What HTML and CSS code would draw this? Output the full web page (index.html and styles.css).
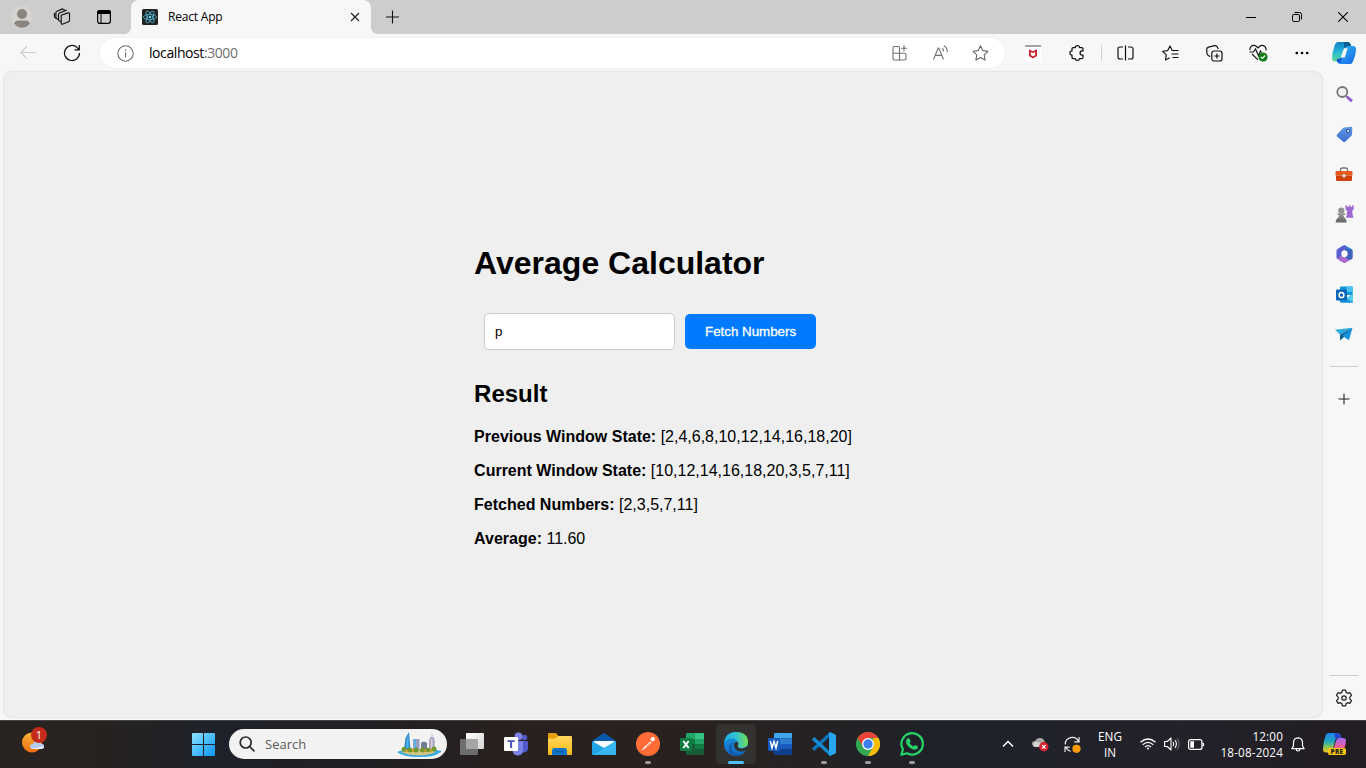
FILE: index.html
```html
<!DOCTYPE html>
<html lang="en">
<head>
<meta charset="utf-8">
<title>React App</title>
<link rel="stylesheet" href="styles.css">
</head>
<body>
<svg class="defs" width="0" height="0" aria-hidden="true">
  <defs>
    <linearGradient id="gWin" gradientUnits="userSpaceOnUse" x1="0" y1="0" x2="23" y2="23"><stop offset="0" stop-color="#8be4ff"/><stop offset="1" stop-color="#0a94f8"/></linearGradient>
    <linearGradient id="gCopA" x1="0" y1="0" x2="0" y2="1"><stop offset="0" stop-color="#0f7fc5"/><stop offset=".5" stop-color="#26b6d8"/><stop offset="1" stop-color="#5bdc95"/></linearGradient>
    <linearGradient id="gCopB" x1="0" y1="0" x2="1" y2="1"><stop offset="0" stop-color="#35c5f4"/><stop offset="1" stop-color="#1560e8"/></linearGradient>
    <linearGradient id="gPreA" x1="0" y1="0" x2="0" y2="1"><stop offset="0" stop-color="#2083ee"/><stop offset=".45" stop-color="#21a6b8"/><stop offset=".75" stop-color="#9bc94a"/><stop offset="1" stop-color="#f4c224"/></linearGradient>
    <linearGradient id="gPreB" x1="0" y1="0" x2="0" y2="1"><stop offset="0" stop-color="#a76af0"/><stop offset=".6" stop-color="#ec5f9b"/><stop offset="1" stop-color="#f68a50"/></linearGradient>
    <linearGradient id="gEdge" x1="0" y1="0" x2="1" y2="0"><stop offset="0" stop-color="#1ca8e2"/><stop offset=".5" stop-color="#35c1d4"/><stop offset="1" stop-color="#6de04f"/></linearGradient>
    <linearGradient id="gEdgeB" x1="0" y1="0" x2="0" y2="1"><stop offset="0" stop-color="#1b9de2"/><stop offset="1" stop-color="#1168c4"/></linearGradient>
    <linearGradient id="gSun" x1="0" y1="0" x2="0" y2="1"><stop offset="0" stop-color="#f9b233"/><stop offset="1" stop-color="#ee6e14"/></linearGradient>
    <linearGradient id="gTag" x1="0" y1="0" x2="0" y2="1"><stop offset="0" stop-color="#5f97e6"/><stop offset="1" stop-color="#3f6fd0"/></linearGradient>
    <linearGradient id="gGrey" x1="0" y1="0" x2="0" y2="1"><stop offset="0" stop-color="#9a9a9a"/><stop offset="1" stop-color="#626262"/></linearGradient>
    <linearGradient id="gTv" x1="0" y1="0" x2="1" y2="1"><stop offset="0" stop-color="#ffffff"/><stop offset="1" stop-color="#d4d4d4"/></linearGradient>
    <linearGradient id="gFold" x1="0" y1="0" x2="0" y2="1"><stop offset="0" stop-color="#ffd75e"/><stop offset="1" stop-color="#f7b917"/></linearGradient>
  </defs>
</svg>

<div class="browser">
  <header class="tabstrip">
    <span class="cell avatar"><svg width="22" height="24" viewBox="0 0 22 24"><ellipse cx="11" cy="12" rx="10.6" ry="11.3" fill="#d6d3d0"/><circle cx="11" cy="9" r="5" fill="#8b8580"/><path d="M3.200 18.500q1-3 4-3h7.600q3 0 4 3-3 4.200-7.800 4.300-4.800-.1-7.800-4.300z" fill="#8b8580"/></svg></span>
    <span class="cell spaces"><svg width="18" height="18" viewBox="0 0 18 18" fill="none" stroke="#111" stroke-width="1.15" stroke-linejoin="round"><path d="M8.200 7.200l6.800-2.300q1.500-.4 1.500 1v6.400q0 1-1 1.400l-5.600 2.300q-1.700.6-1.700-1z"/><path d="M8 13.800l-1.600-.8q-.9-.5-.9-1.500V6.400q0-1 1-1.400l7-2.900"/><path d="M5.300 11.500l-1.500-.8q-.9-.5-.9-1.500V4.700q0-1 1-1.400L9.500.9l2.200 1"/><path d="M3 10.200q-1.600-.4-1.600-2.200V5"/></svg></span>
    <span class="cell tabact"><svg width="16" height="16" viewBox="0 0 16 16"><rect x="1.600" y="1.600" width="12.800" height="12.800" rx="2.300" fill="none" stroke="#000" stroke-width="1.200"/><path d="M1 5V3.500Q1 1 3.500 1h9Q15 1 15 3.500V5z"/><path d="M5 5v9.500" stroke="#000" stroke-width="1"/></svg></span>
    <div class="tab">
      <svg width="16" height="16" viewBox="0 0 16 16"><rect width="16" height="16" rx="1.500" fill="#222"/><g fill="none" stroke="#4fb8d3" stroke-width=".8"><ellipse cx="8" cy="8" rx="6.600" ry="2.600"/><ellipse cx="8" cy="8" rx="6.600" ry="2.600" transform="rotate(60 8 8)"/><ellipse cx="8" cy="8" rx="6.600" ry="2.600" transform="rotate(120 8 8)"/></g><circle cx="8" cy="8" r="1.300" fill="#61dafb"/></svg>
      <span class="tab-title">React App</span>
      <svg class="tab-x" width="10" height="10" viewBox="0 0 10 10"><path d="M1 1l8 8M9 1l-8 8" stroke="#222" stroke-width="1.200"/></svg>
    </div>
    <span class="cell newtab"><svg width="14" height="14" viewBox="0 0 14 14"><path d="M7.500 .5v13M1 7h13" stroke="#111" stroke-width="1.100"/></svg></span>
    <div class="wincontrols">
      <span class="cell"><svg width="10" height="10" viewBox="0 0 10 10"><path d="M0 5.500h10" stroke="#000"/></svg></span>
      <span class="cell"><svg width="10" height="10" viewBox="0 0 10 10" fill="none" stroke="#000"><rect x=".5" y="2.500" width="7" height="7" rx="1.300"/><path d="M2.500.5H7.500Q9.500.5 9.500 2.500v5"/></svg></span>
      <span class="cell"><svg width="10" height="10" viewBox="0 0 10 10"><path d="M0 0l10 10M10 0L0 10" stroke="#000" stroke-width="1.100"/></svg></span>
    </div>
  </header>

  <div class="toolbar">
    <span class="cell nav back"><svg width="16" height="14" viewBox="0 0 16 14" fill="none" stroke="#cbcbcb" stroke-width="1.100"><path d="M16 6.500H.8M7 .3L.8 6.500 7 12.700"/></svg></span>
    <span class="cell nav"><svg width="18" height="18" viewBox="0 0 18 18" fill="none" stroke="#111" stroke-width="1.250"><path d="M16.500 9A7.500 7.500 0 1 1 14.200 3.600L16 5.500"/><path d="M16.300 1v4.800h-4.800"/></svg></span>
    <div class="address">
      <svg class="info" width="17" height="17" viewBox="0 0 17 17" fill="none" stroke="#6c6c6c" stroke-width="1.100"><circle cx="8.500" cy="8.500" r="7.700"/><path d="M8.500 7.200v5M8.500 4.500v1.400"/></svg>
      <span class="url">localhost<span class="port">:3000</span></span>
      <span class="cell aicon"><svg width="16" height="16" viewBox="0 0 16 16" fill="none" stroke="#717171" stroke-width="1.100"><path d="M7.500 15V2.500Q7.500 1.500 6.500 1.500H2.500Q1 1.500 1 3v10.500Q1 15 2.500 15H12.500Q14 15 14 13.500V9.500Q14 8.200 12.700 8.200H1"/><path d="M12 .2v6M9 3.200h6"/></svg></span>
      <span class="cell aicon"><svg width="17" height="16" viewBox="0 0 17 16" fill="none" stroke="#717171" stroke-width="1.100"><path d="M1.500 14.500L6.200 3h.6l4.700 11.500M3.200 10.400h6.600M9.900 3q1.900 1.100 1.700 3.500M11.800.8q3.700 2 3.500 6.400"/></svg></span>
      <span class="cell aicon"><svg width="17" height="16" viewBox="0 0 17 16" fill="none" stroke="#666" stroke-width="1.100" stroke-linejoin="round"><path d="M8.500.8l2.300 4.800 5.200.7-3.800 3.600.9 5.200-4.600-2.500L3.900 15.100l.9-5.200L1 6.300l5.200-.7z"/></svg></span>
    </div>
    <span class="cell tool mcafee"><svg width="16" height="16" viewBox="0 0 16 16"><path fill="#fff" d="M0 2h16v14H0z"/><path fill="#a3a3a3" d="M0 0h16v2H0z"/><path d="M4 4.300l4 1.900 4-1.900v6.600l-4 2.600-4-2.600z" fill="#c8202f"/><path d="M5.800 6.900L8 8l2.200-1.100v3.200L8 11.400l-2.200-1.300z" fill="#fff"/></svg></span>
    <span class="cell tool"><svg width="16" height="16" viewBox="0 0 16 16" fill="none" stroke="#111" stroke-width="1.250" stroke-linejoin="round"><path d="M4.200 2.600h2.100a2.100 1.900 0 0 1 4.200 0h2.300q1.200 0 1.200 1.200v2.100h-.8a2.100 2.100 0 0 0 0 4.300h.8v2.100q0 1.200-1.200 1.200h-2.300a2.100 1.900 0 0 1-4.200 0H4.200Q3 13.500 3 12.300v-2.200a2.100 2.100 0 0 1 0-4.200V3.800Q3 2.600 4.200 2.600z"/></svg></span>
    <span class="bar"></span>
    <span class="cell tool split"><svg width="17" height="16" viewBox="0 0 17 16" fill="none" stroke="#111" stroke-width="1.200"><path d="M8.500.5v15M6 2H3Q1 2 1 4v8q0 2 2 2h3M11 2h3q2 0 2 2v8q0 2-2 2h-3"/></svg></span>
    <span class="cell tool"><svg width="17" height="16" viewBox="0 0 17 16" fill="none" stroke="#111" stroke-width="1.150" stroke-linejoin="round"><path d="M10.200 5.500L8 .9 5.700 5.600l-5 .7 3.600 3.600-.8 5L7.700 12.700M10.200 5.500l1.500.2M10.500 5.500h6M9.500 9h7M10.500 12.500h6"/></svg></span>
    <span class="cell tool"><svg width="17" height="17" viewBox="0 0 17 17" fill="none" stroke="#111" stroke-width="1.200"><rect x="5.800" y="6" width="10.200" height="10" rx="2.200"/><path d="M10.900 8.400v5.200M8.300 11h5.200M4.200 11.500L2.600 10.700Q1 9.500.9 8.200L.7 4.700Q.6 2.700 2.500 2.100L8.500.7q1.800-.2 2.600 1.100l1.300 2.200"/></svg></span>
    <span class="cell tool"><svg width="19" height="18" viewBox="0 0 19 18" fill="none" stroke="#111" stroke-width="1.150"><path d="M1 6.200Q.5 3.900 2.200 2.300 4.500.6 7 2l2 1.900L11 2q2.500-1.400 4.600.3Q17.500 4 17 6.300M.5 8h4l2-3 3 6.500L11.500 7l1 1.500M3 10l6 5.800"/><circle cx="14" cy="13" r="4.600" fill="#137b16" stroke="none"/><path d="M11.800 13l1.600 1.500 2.800-3" stroke="#fff"/></svg></span>
    <span class="cell tool"><svg width="14" height="4" viewBox="0 0 14 4"><circle cx="1.800" cy="2" r="1.350"/><circle cx="7" cy="2" r="1.350"/><circle cx="12.200" cy="2" r="1.350"/></svg></span>
    <span class="cell cop"><svg width="24" height="22" viewBox="0 0 24 22"><path d="M6 0h9.500q2.500 0 3.200 2.500L19.600 6H15q-2 0-2.700 2.200L9.600 17q-.8 2.500-3.400 2.500H3Q0 19.500 0 16.500 0 10 3 2.500 4 0 6 0z" fill="url(#gCopA)"/><path d="M12 0h3.500q2.500 0 3.200 2.500L19.600 6H15q-2 0-2.700 2.200z" fill="#0b5e91"/><path d="M18 22H8.500Q6 22 5.300 19.500L4.600 17H6q3 0 4-3l2.600-7.500Q13.500 4 16.500 4H21q3 0 3 3 0 6.200-3 12.500Q20 22 18 22z" fill="url(#gCopB)"/><path d="M5.300 19.500L4.600 17H6q3 0 4-3l-1 5q-1 2.500-3 2z" fill="#1b50d8"/><path d="M12 6.300h3.600l-2.800 9.200H8.700z" fill="#f7f7f7"/></svg></span>
  </div>

  <div class="body">
    <main class="page">
      <div class="app">
        <h1>Average Calculator</h1>
        <div><input class="field" type="text" value="p"><button class="fetch">Fetch Numbers</button></div>
        <h2>Result</h2>
        <p><strong>Previous Window State:</strong> [2,4,6,8,10,12,14,16,18,20]</p>
        <p><strong>Current Window State:</strong> [10,12,14,16,18,20,3,5,7,11]</p>
        <p><strong>Fetched Numbers:</strong> [2,3,5,7,11]</p>
        <p><strong>Average:</strong> 11.60</p>
      </div>
    </main>
    <aside class="sidebar">
      <span class="side"><svg width="17" height="17" viewBox="0 0 17 17" fill="none"><circle cx="6.300" cy="6" r="5" stroke="#777" stroke-width="1.800" fill="#f0f0f0"/><path d="M10 9.700l1.700 1.700" stroke="#777" stroke-width="1.600"/><path d="M11.800 11.500l3.200 2.900" stroke="#9560d0" stroke-width="3" stroke-linecap="round"/></svg></span>
      <span class="side"><svg width="17" height="17" viewBox="0 0 17 17"><path d="M8.200 1.500L15 .8q1.400 0 1.300 1.400L16 8.600q0 .7-.6 1.200l-6 5.700q-1.300 1-2.500 0L1.200 10.700q-1.200-1.300 0-2.500L6.900 2.200q.6-.6 1.300-.7z" fill="url(#gTag)"/><circle cx="12.200" cy="5" r="1.600" fill="#dfe9fb" stroke="#294990"/></svg></span>
      <span class="side"><svg width="18" height="15" viewBox="0 0 18 15"><path d="M5.500 4V2.700Q5.500 1 7.200 1h3.600q1.700 0 1.700 1.700V4" fill="none" stroke="#777" stroke-width="1.400"/><path d="M1.500 4h15q1 0 1 1v3.500H.5V5q0-1 1-1z" fill="#e85a1d"/><path d="M1 8.500h16V13q0 1-1 1H2q-1 0-1-1z" fill="#cf420e"/><rect x="7.500" y="7" width="3" height="3.500" rx="1.300" fill="#ddd"/></svg></span>
      <span class="side"><svg width="19" height="18" viewBox="0 0 19 18"><path d="M10.500 .5h1.800V2h1.400V.5h1.900V2h1.400V.5h1.700v4l-1.500 1.200.6 5 .8 2H11l.6-2 .6-5-1.700-1.200z" fill="#9d68cf"/><circle cx="6.300" cy="5.600" r="3.100" fill="#919191"/><path d="M2.400 8.300h7.800v1.800H8.300q.2 2.300 2.600 4.100.7.800.7 3.300H.7q0-2.500.8-3.300 2.400-1.800 2.600-4.100H2.400z" fill="url(#gGrey)"/></svg></span>
      <span class="side"><svg width="17" height="18" viewBox="0 0 17 18"><path d="M8.500 0l7.200 4.100q.8.500.8 1.500V9L11 11.500v-5L8.500 5 5 3z" fill="#318bdc"/><path d="M8.500 0Q5 1.500 1.300 4.200.5 4.700.5 5.700v6.800q0 1 .8 1.500L6 11V7.500q0-1 .7-1.500L11 3.500z" fill="#5a5fd0"/><path d="M1 13.500Q3 15.800 7.500 17.700q1 .4 2 0l6.200-3.700q.8-.5.8-1.500V8.500L11 11l-2.500 1.500L6 11z" fill="#a868cf"/><path d="M16.500 5.500v7q0 1-.8 1.500l-2 1L9 12.200l2-1.300V6.500L8.500 5 11 3.500z" fill="#3c61ba"/><circle cx="8.500" cy="8.800" r="3.200" fill="#f7f7f7"/></svg></span>
      <span class="side"><svg width="17" height="17" viewBox="0 0 17 17"><path d="M5 .5h11q.7 0 .7.7V9H4V1.200q0-.7 1-.7z" fill="#1594dd"/><path d="M10.500.5H16q.7 0 .7.700V6h-6.200z" fill="#48c4f2"/><path d="M4 9l6 3.500L17 8v8q0 .7-.7.7H5q-1 0-1-1z" fill="#1790df"/><path d="M10 12.500L17 8v8z" fill="#55ceed"/><rect x="0" y="3.500" width="11" height="11" rx="1" fill="#0967b7"/><ellipse cx="5.500" cy="9" rx="2.400" ry="2.600" fill="none" stroke="#fff" stroke-width="1.500"/></svg></span>
      <span class="side"><svg width="18" height="14" viewBox="0 0 18 14"><path d="M0 2.800L17.500.7 5.500 8z" fill="#29acdf"/><path d="M17.500.7L5 8v5.500l3.500-3z" fill="#0d5c92"/><path d="M17.500.7L7.500 8.800l5.600 4q.8.400 1.100-.6z" fill="#1592dc"/></svg></span>
      <span class="rule"></span>
      <span class="add"><svg width="13" height="13" viewBox="0 0 13 13"><path d="M6 .5v11M.5 6h11" stroke="#222" stroke-width="1.050"/></svg></span>
      <span class="rule low"></span>
      <span class="gear"><svg width="18" height="18" viewBox="0 0 18 18" fill="none" stroke="#222" stroke-width="1.250" stroke-linejoin="round"><path d="M7.400 1.200h3.200l.5 2.200 1.500.9 2.200-.7 1.700 2.800-1.700 1.700v1.800l1.700 1.700-1.700 2.800-2.200-.7-1.500.9-.5 2.200H7.400l-.5-2.200-1.500-.9-2.200.7-1.700-2.800 1.700-1.700V8.100L1.500 6.400l1.700-2.800 2.200.7 1.500-.9z"/><circle cx="9" cy="9" r="2.200"/></svg></span>
    </aside>
  </div>
</div>

<footer class="taskbar">
  <span class="weather">
    <svg width="24" height="24" viewBox="0 0 24 24"><circle cx="10" cy="11.500" r="10" fill="url(#gSun)"/><path d="M11 18q-3-.2-3-2.500T11 13q.8-3 3.800-3 2.600 0 3.600 2.600 3.600-.2 3.600 2.700 0 2.700-3 2.700z" fill="#b6cdf4"/><path d="M9 17q2 1 5 0t8-2q0 3-3 3h-8q-1.500 0-2-1z" fill="#e2ebff"/></svg>
    <span class="badge">1</span>
  </span>
  <span class="start"><svg width="23" height="23" viewBox="0 0 23 23" fill="url(#gWin)"><path d="M0 1q0-1 1-1h10v11H0zM12 0h10q1 0 1 1v10H12zM0 12h11v11H1q-1 0-1-1zM12 12h11v10q0 1-1 1H12z"/></svg></span>
  <div class="search">
    <svg width="16" height="16" viewBox="0 0 16 16" fill="none" stroke="#2b2b2b" stroke-width="1.700"><circle cx="6.700" cy="6.500" r="5.500"/><path d="M10.700 10.500l4.200 4.300" stroke-linecap="round"/></svg>
    <span class="search-text">Search</span>
    <svg class="city" width="46" height="25" viewBox="0 0 46 25"><path d="M1 20q6-3 22-3t22 2q1 1-2 2-4 4-20 4-16 0-22-5z" fill="#35a9e2"/><path d="M5 20q8-4 18-3 12 0 17 3-6 3-17 3.500Q11 23 5 20z" fill="#d4c481"/><path d="M8 18l1.500-12L13 0l1.500 18z" fill="#2784ca"/><path d="M10 16l.7-9L12.500 2l.2 14z" fill="#4fb3e5"/><path d="M17 7h6.500v11H17z" fill="#9a9ebe"/><path d="M18 7h2v11h-2z" fill="#5fb0df"/><path d="M25 11q3-3 6 0v7h-6z" fill="#6f7d93"/><path d="M33 18V8l1-2.500 1.500-.5L36 0l.5 5 2 1L39 18z" fill="#a8a6c9"/><path d="M35 7h1.500v10H35z" fill="#e0cfc8"/><g fill="#6f972c"><circle cx="8" cy="17.500" r="2.400"/><circle cx="14" cy="18" r="2.500"/><circle cx="20" cy="18" r="2.500"/><circle cx="26.500" cy="18" r="2.500"/><circle cx="32" cy="18" r="2.300"/><circle cx="38" cy="17" r="2.500"/></g><g fill="#c39a29"><circle cx="11" cy="18.500" r="1.500"/><circle cx="17" cy="18.500" r="1.500"/><circle cx="29" cy="18.500" r="1.500"/><circle cx="35" cy="18.500" r="1.400"/></g></svg>
  </div>
  <div class="apps">
    <span class="appicon"><svg width="24" height="24" viewBox="0 0 24 24"><rect x="6" y="1" width="18" height="16" rx="1" fill="url(#gTv)"/><rect x="0" y="7" width="18" height="16" rx="1" fill="#777" fill-opacity=".88"/><path d="M6 7h12v10H6z" fill="#a5a5a5"/></svg></span>
    <span class="appicon"><svg width="24" height="24" viewBox="0 0 24 24"><circle cx="20.500" cy="5.500" r="2.700" fill="#5059c9"/><path d="M16 9h7q1 0 1 1v6q0 4-4 4.500h-4z" fill="#5059c9"/><circle cx="14.500" cy="4.300" r="3.900" fill="#7b83eb"/><path d="M9 9h9q1 0 1 1v8q0 5.300-5 5.500-5 0-5.500-5z" fill="#7b83eb"/><rect y="5" width="14" height="14" rx="1" fill="#fff"/><path d="M3.500 8.200h7.200v1.900H8.100V16h-2v-5.900H3.500z" fill="#4b53bc"/></svg></span>
    <span class="appicon"><svg width="24" height="24" viewBox="0 0 24 24"><path d="M0 2q0-1 1-1h7l3 3.500L8 8H0z" fill="#e3a008"/><path d="M0 6.500h7L10 4h13q1 0 1 1v17q0 1-1 1H1q-1 0-1-1z" fill="url(#gFold)"/><path d="M4 23v-4.500Q4 16 6.500 16h10q2.500 0 2.500 2.500V23z" fill="#1176cb"/><path d="M8.500 19h6q1.500 0 1.500 1.500H7q0-1.500 1.500-1.500z" fill="#0c5ca5"/></svg></span>
    <span class="appicon"><svg width="24" height="24" viewBox="0 0 24 24"><path d="M0 9L11 1.500q1-.7 2 0L24 9v3H0z" fill="#0b58a5"/><path d="M2 9h20v8H2z" fill="#f5fbff"/><path d="M0 9l24 14H1q-1 0-1-1z" fill="#20a3e7"/><path d="M24 9v13q0 1-1 1L11.500 16z" fill="#48c6f2"/><path d="M24 9v13q0 1-1 1H1z" fill="#37b6ef"/></svg></span>
    <span class="appicon running"><svg width="24" height="24" viewBox="0 0 24 24"><circle cx="12" cy="12" r="12" fill="#ff6c37"/><path d="M5 19l3.500-4.200 5.700-5.500 1.200 1.400-6.100 5.500z" fill="#fff"/><circle cx="16.800" cy="7.200" r="2.100" fill="#fff"/><path d="M10 14.500l4-3.700" stroke="#e55c2b" stroke-width=".7"/></svg></span>
    <span class="appicon"><svg width="24" height="24" viewBox="0 0 24 24"><path d="M6 2q0-1 1-1h8v6H6z" fill="#21a366"/><path d="M15 1h8q1 0 1 1v5h-9z" fill="#33c481"/><path d="M6 7h9v5H6z" fill="#107c41"/><path d="M15 7h9v5h-9z" fill="#21a366"/><path d="M6 12h9v5H6z" fill="#185c37"/><path d="M15 12h9v5.500h-9z" fill="#107c41"/><path d="M6 17h18v5q0 1-1 1H7q-1 0-1-1z" fill="#185c37"/><rect y="6" width="12" height="13" rx="1" fill="#107c41"/><path d="M3.300 9l5.400 7M8.700 9l-5.400 7" stroke="#fff" stroke-width="1.900"/></svg></span>
    <span class="appicon active"><svg width="24" height="24" viewBox="0 0 24 24"><circle cx="12" cy="12" r="12" fill="url(#gEdgeB)"/><path d="M.2 10.300Q1.500 0 12 0q12 .3 12 10 0 5.700-6.500 6-4.500-.3-3.500-2.500 1-1.700 0-3.500Q12 6.500 8 6.500 3 6.500.2 10.300z" fill="url(#gEdge)"/><path d="M8 12q-1.800 4 1.500 8 4.500 3.700 11 0-3.500 4-8.500 4-6.800-.7-7.500-7Q5 11.500 10.500 9.500 8.500 10.500 8 12z" fill="#135ba8"/><path d="M13.800 10q1 2 0 3.700-.7 1.700 1.500 2.600 4 1.400 8.700-2.500.5 2.400-1 4.400-6 2.800-10.500 0-3.500-3.200-2.500-6.200 1-2.400 3.800-2z" fill="#343131"/></svg></span>
    <span class="appicon"><svg width="24" height="24" viewBox="0 0 24 24"><path d="M6 6.500V2q0-1 1-1h16q1 0 1 1v4.500z" fill="#41a5ee"/><path d="M6 6.500h18V12H6z" fill="#2b7cd3"/><path d="M6 12h18v5.500H6z" fill="#185abd"/><path d="M6 17.500h18V22q0 1-1 1H7q-1 0-1-1z" fill="#103f91"/><rect y="6" width="12" height="13" rx="1" fill="#185abd"/><path d="M2.300 9L4 16l2-6.500L8 16l1.700-7" fill="none" stroke="#fff" stroke-width="1.500"/></svg></span>
    <span class="appicon running"><svg width="24" height="24" viewBox="0 0 24 24"><path d="M18 0l-1.200 5.500L3 18.500q-.5.400-1 0L.3 17q-.5-.6 0-1.100z" fill="#0a75bb"/><path d="M18 24l-1.200-5.500L3 5.500q-.5-.4-1 0L.3 7q-.5.600 0 1.100z" fill="#168bd2"/><path d="M18 0l5.200 2.500q.8.400.8 1.300v16.400q0 .9-.8 1.300L18 24q-1-.5-1-1.500v-21Q17 .5 18 0z" fill="#29a5ee"/></svg></span>
    <span class="appicon running"><svg width="24" height="24" viewBox="0 0 24 24"><circle cx="12" cy="12" r="12" fill="#34a853"/><path d="M1.600 6A12 12 0 0 1 22.400 6H12L8 16z" fill="#ea4335"/><path d="M22.400 6A12 12 0 0 1 12 24l5.200-9V6z" fill="#fbbc04"/><circle cx="12" cy="12" r="6" fill="#fff"/><circle cx="12" cy="12" r="4.700" fill="#3d7ff0"/></svg></span>
    <span class="appicon running"><svg width="24" height="24" viewBox="0 0 24 24"><path d="M1.400 22.800l1.500-5.600A10.700 10.700 0 1 1 7 21.200z" fill="none" stroke="#25d366" stroke-width="2.200" stroke-linejoin="round"/><path d="M8 6.300h1.200l1.500 3.100-1.200 1.700q1.500 2.500 4 3.500l1.500-1.600 3 1.500q0 2.600-2.500 3.100-3.500.5-6.700-2.500Q5.500 11.500 6.200 8.200 6.700 6.700 8 6.300z" fill="#25d366"/></svg></span>
  </div>
  <div class="tray">
    <span class="cell chev"><svg width="12" height="8" viewBox="0 0 12 8"><path d="M1 6.500l5-5 5 5" fill="none" stroke="#fff" stroke-width="1.500"/></svg></span>
    <span class="cell t32"><svg width="17" height="15" viewBox="0 0 17 15"><path d="M3 9Q0 9 0 6.500T3 4Q4.500 1 8 1q3.800 0 4.500 3.500Q14 5 14 7L9 10z" fill="#a8a8a8"/><path d="M1 8q1-4 5-3l7 3-4 2H2z" fill="#d2d2d2"/><circle cx="11.800" cy="9.800" r="4.700" fill="#d4212e"/><path d="M10 8l3.600 3.600M13.600 8L10 11.600" stroke="#fff" stroke-width="1.200"/></svg></span>
    <span class="cell t32"><svg width="17" height="17" viewBox="0 0 17 17" fill="none" stroke="#ededed" stroke-width="1.200"><path d="M1.200 8.500A7 7 0 0 1 14.600 5.600M15 1v4.800h-4.700M6.500 15.500A7 7 0 0 1 1.900 11.300M1 16v-4.800h4.700"/><circle cx="12.500" cy="12.800" r="4.100" fill="#ff9b0a" stroke="none"/></svg></span>
    <span class="lang">ENG<br>IN</span>
    <svg class="wifi" width="16" height="12" viewBox="0 0 16 12" fill="none" stroke="#fff" stroke-width="1.250"><path d="M.5 4.300Q8-2.300 15.500 4.300M2.700 6.700Q8 2 13.300 6.700M5 9Q8 6.300 11 9"/><circle cx="8" cy="10.600" r="1" fill="#fff" stroke="none"/></svg>
    <svg class="vol" width="16" height="14" viewBox="0 0 16 14" fill="none" stroke="#fff" stroke-width="1.100" stroke-linejoin="round"><path d="M.6 4.500h2.700L7 1v12L3.300 9.500H.6zM9 4.700q1.500 2.300 0 4.600M11 3q2.800 4 0 8"/><path d="M13 1.200q4.200 5.800 0 11.600" stroke="#6d6d70"/></svg>
    <svg class="batt" width="17" height="11" viewBox="0 0 17 11"><rect x=".6" y=".6" width="13.300" height="9.800" rx="2" fill="none" stroke="#fff" stroke-width="1.200"/><path d="M2.300 2.300H6v6.400H2.300zM14.500 3.500H15q1.200 0 1.200 2t-1.200 2h-.5z" fill="#fff"/></svg>
    <span class="clock">12:00<br>18-08-2024</span>
    <svg class="bell" width="14" height="15" viewBox="0 0 14 15" fill="none" stroke="#fff" stroke-width="1.200" stroke-linejoin="round"><path d="M7 .8q4.400.2 4.500 4.700v3.200l1.600 3H.9l1.600-3V5.500Q2.600 1 7 .8zM5 12q.3 2 2 2t2-2"/></svg>
    <span class="pre"><svg width="24" height="22" viewBox="0 0 24 22"><path d="M5.500 0h9q2.500 0 3.300 2.500L18.600 5H15q-2 0-2.700 2.200L9.600 17q-.8 2.500-3.400 2.500H3q-3 0-3-3Q0 9 2.600 2.500 3.500 0 5.500 0z" fill="url(#gPreA)"/><path d="M11.500 0h3q2.500 0 3.300 2.500L18.600 5H15q-2 0-2.700 2.200z" fill="#2347c8"/><path d="M18 20H9l4-12q.9-3 3.500-3H20q3.300 0 3 3 0 4-2.500 9.500Q19.500 20 18 20z" fill="url(#gPreB)"/></svg><span class="pre-tag">PRE</span></span>
  </div>
</footer>
</body>
</html>
```
FILE: styles.css
```css
* { box-sizing: border-box; }
html, body { margin: 0; height: 100%; overflow: hidden; }
body { width: 1366px; height: 768px; display: flex; flex-direction: column; background: #f7f7f7; font-family: "Open Sans", "Noto Sans", sans-serif; color: #000; }
svg { display: block; flex: none; }
.defs { position: absolute; }
.cell { display: flex; align-items: center; justify-content: center; flex: none; }

.browser { height: 720px; display: flex; flex-direction: column; }

.tabstrip { height: 34px; flex: none; display: flex; background: #cdcdcd; }
.avatar { width: 44px; }
.spaces { width: 36px; }
.tabact { width: 48px; margin-right: 3px; }
.tab { width: 240px; height: 34px; display: flex; align-items: center; padding: 0 11px; background: #f7f7f7; border-radius: 8px 8px 0 0; position: relative; }
.tab::before, .tab::after { content: ""; position: absolute; bottom: 0; width: 6px; height: 6px; }
.tab::before { left: -6px; background: radial-gradient(circle at 0 0, transparent 5.5px, #f7f7f7 6px); }
.tab::after { right: -6px; background: radial-gradient(circle at 100% 0, transparent 5.5px, #f7f7f7 6px); }
.tab-title { margin-left: 10px; font-size: 12px; line-height: 16px; letter-spacing: -0.2px; }
.tab-x { margin-left: auto; }
.newtab { width: 42px; }
.wincontrols { display: flex; margin-left: auto; }
.wincontrols .cell { width: 46px; }

.toolbar { height: 37px; flex: none; display: flex; align-items: center; }
.toolbar > .tool, .toolbar > .cop, .toolbar > .nav { padding-top: 1px; }
.nav { width: 44px; height: 34px; }
.back { margin-left: 6px; }
.address { width: 905px; height: 30px; margin: 1px 0 0 6px; display: flex; align-items: center; padding: 0 5px 0 17px; background: #fff; border-radius: 15px; box-shadow: 0 0 3px rgba(0, 0, 0, .05); }
.url { flex: 1; margin-left: 15px; font-size: 14px; letter-spacing: -0.42px; line-height: 20px; }
.port { color: #717171; }
.aicon { width: 40px; }
.tool { width: 44px; }
.mcafee { margin-left: 6px; }
.bar { width: 1px; height: 16px; margin-left: 2px; background: #cfcfcf; }
.split { width: 46px; }
.cop { width: 40px; }

.body { flex: 1; display: flex; padding-left: 4px; }
.page { width: 1318px; height: 645px; margin-top: 1px; display: flex; flex-direction: column; align-items: center; justify-content: center; background: #efefef; border-radius: 8px; box-shadow: 0 0 2px rgba(0, 0, 0, .25); font-family: "Liberation Sans", Arial, sans-serif; }
.app { padding-bottom: 2px; }
.app h1 { font-size: 32px; line-height: 37px; margin: 21.44px 0; }
.app h2 { font-size: 24px; line-height: 27px; margin: 19.92px 0 20.92px; }
.app p { font-size: 16px; line-height: 18px; margin: 16px 0; }
.field { width: 191px; height: 37px; margin: 10px; padding: 10px; border: 1px solid #ccc; border-radius: 5px; background: #fff; font: 13.333px "Liberation Sans", Arial, sans-serif; color: #000; }
.fetch { width: 131px; height: 35px; padding: 0; border: 0; border-radius: 5px; background: #007bff; color: #fff; font: 13.333px "Liberation Sans", Arial, sans-serif; -webkit-text-stroke: .3px #fff; }

.sidebar { width: 44px; display: flex; flex-direction: column; align-items: center; padding-top: 3px; }
.side { height: 40px; display: flex; align-items: center; justify-content: center; }
.rule { width: 28px; height: 1px; margin-top: 12px; background: #ccc; }
.add { margin-top: 26px; }
.low { margin-top: auto; }
.gear { margin: 13px 0 13px; }

.taskbar { height: 48px; display: flex; align-items: center; box-shadow: inset 0 1px #444; background: linear-gradient(90deg, #292320 0, #272220 100px, #1e222a 210px, #221f22 390px, #29211f 520px, #292120 740px, #1e2229 940px, #23212a 1180px, #211d22 1366px); color: #fff; }
.weather { width: 24px; height: 24px; margin: -2px 0 0 22px; position: relative; }
.badge { position: absolute; left: 9px; top: -4px; width: 16px; height: 16px; border-radius: 50%; background: #c42b1c; font-size: 11px; line-height: 16px; text-align: center; }
.start { margin-left: 146px; }
.search { width: 218px; height: 30px; margin-left: 14px; padding: 0 5px 0 10px; display: flex; align-items: center; border-radius: 15px; background: #f2f2f2; }
.search-text { margin-left: 10px; font-size: 13px; color: #5c5c5c; }
.city { margin-left: auto; }
.apps { display: flex; gap: 4px; margin-left: 5px; }
.appicon { width: 40px; height: 40px; display: flex; align-items: center; justify-content: center; position: relative; }
.running::after, .active::after { content: ""; position: absolute; bottom: 0; left: 17px; width: 6px; height: 3px; border-radius: 2px; background: #9b9b9b; }
.active { background: #343131; border-radius: 4px; }
.active::after { left: 12px; width: 16px; background: #4cc2ff; }

.tray { flex: 1; display: flex; align-items: center; margin-left: 60px; font-size: 11.700px; line-height: 16px; }
.chev { width: 32px; }
.t32 { width: 32px; }
.lang { width: 44px; text-align: center; }
.wifi { margin-left: 8px; }
.vol { margin-left: 8px; }
.batt { margin-left: 8px; }
.clock { width: 78px; text-align: right; white-space: nowrap; letter-spacing: .15px; }
.bell { margin-left: 8px; }
.pre { margin-left: 18px; position: relative; width: 24px; height: 22px; }
.pre-tag { position: absolute; left: 5px; top: 15px; width: 18px; height: 7px; border-radius: 2px; background: #fdc70c; color: #222; font-size: 6.500px; line-height: 7px; font-weight: 800; text-align: center; letter-spacing: .3px; }
```
